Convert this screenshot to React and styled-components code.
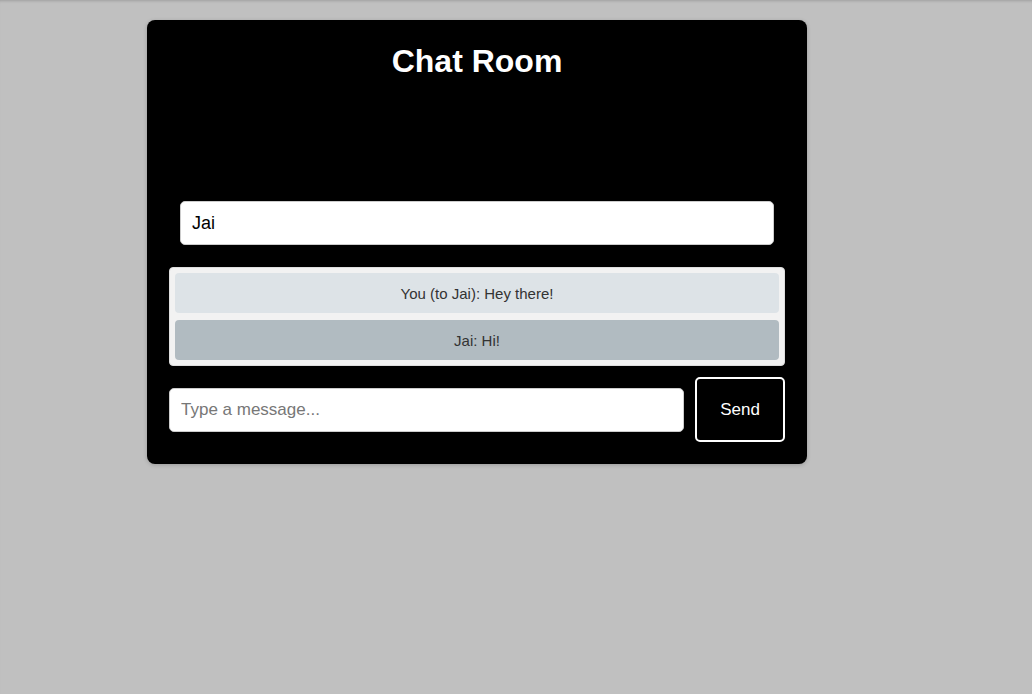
import React, { useState } from 'react'
import styled, { createGlobalStyle } from 'styled-components'

const GlobalStyle = createGlobalStyle`
    html, body {
        margin: 0;
        padding: 0;
        background: #c0c0c0;
        font-family: "Liberation Sans", Arial, sans-serif;
    }
    body {
        min-height: 694px;
        box-shadow: inset 0 3px 3px -2px rgba(0, 0, 0, 0.18);
    }
`

const messages = [
    { id: 1, text: 'You (to Jai): Hey there!', mine: true },
    { id: 2, text: 'Jai: Hi!', mine: false },
]

const App = () => {
    const [recipient, setRecipient] = useState('Jai')
    const [text, setText] = useState('')

    return (
        <>
            <GlobalStyle />
            <Page>
                <Card>
                    <Title>Chat Room</Title>
                    <NameInput
                        value={recipient}
                        onChange={(e) => setRecipient(e.target.value)}
                    />
                    <MessageList>
                        {messages.map((m) => (
                            <Message key={m.id} mine={m.mine}>{m.text}</Message>
                        ))}
                    </MessageList>
                    <ComposeRow>
                        <MessageInput
                            placeholder="Type a message..."
                            value={text}
                            onChange={(e) => setText(e.target.value)}
                        />
                        <SendButton>Send</SendButton>
                    </ComposeRow>
                </Card>
            </Page>
        </>
    )
}

const Page = styled.div`
    padding: 20px 0 0 147px;
`

const Card = styled.div`
    width: 660px;
    box-sizing: border-box;
    background: #000;
    border-radius: 8px;
    padding: 22px 22px 22px;
    display: flex;
    flex-direction: column;
    box-shadow: 0 1px 4px rgba(0, 0, 0, 0.2);
`

const Title = styled.h1`
    margin: 0;
    color: #fff;
    font-size: 32px;
    line-height: 38px;
    font-weight: bold;
    text-align: center;
`

const NameInput = styled.input`
    margin: 121px 11px 0;
    height: 44px;
    box-sizing: border-box;
    border: 1px solid #ccc;
    border-radius: 5px;
    padding: 0 11px;
    font-family: "Liberation Sans", Arial, sans-serif;
    font-size: 18px;
    color: #000;
    background: #fff;
    outline: none;
`

const MessageList = styled.div`
    margin-top: 22px;
    background: #f2f2f2;
    border: 1px solid #ddd;
    border-radius: 4px;
    padding: 5px;
    display: flex;
    flex-direction: column;
    gap: 7px;
`

const Message = styled.div`
    height: 40px;
    display: flex;
    align-items: center;
    justify-content: center;
    border-radius: 4px;
    background: ${(p) => (p.mine ? '#dde3e7' : '#b1bbc1')};
    color: #333;
    font-size: 15px;
`

const ComposeRow = styled.div`
    margin-top: 11px;
    display: flex;
    align-items: center;
    gap: 11px;
`

const MessageInput = styled.input`
    flex: 1;
    height: 44px;
    box-sizing: border-box;
    border: 1px solid #ccc;
    border-radius: 5px;
    padding: 0 11px;
    font-family: "Liberation Sans", Arial, sans-serif;
    font-size: 17px;
    background: #fff;
    outline: none;

    &::placeholder {
        color: #777;
    }
`

const SendButton = styled.button`
    width: 90px;
    height: 65px;
    box-sizing: border-box;
    background: #000;
    color: #fff;
    border: 2px solid #fff;
    border-radius: 5px;
    font-family: "Liberation Sans", Arial, sans-serif;
    font-size: 17px;
    cursor: pointer;
`

export default App
